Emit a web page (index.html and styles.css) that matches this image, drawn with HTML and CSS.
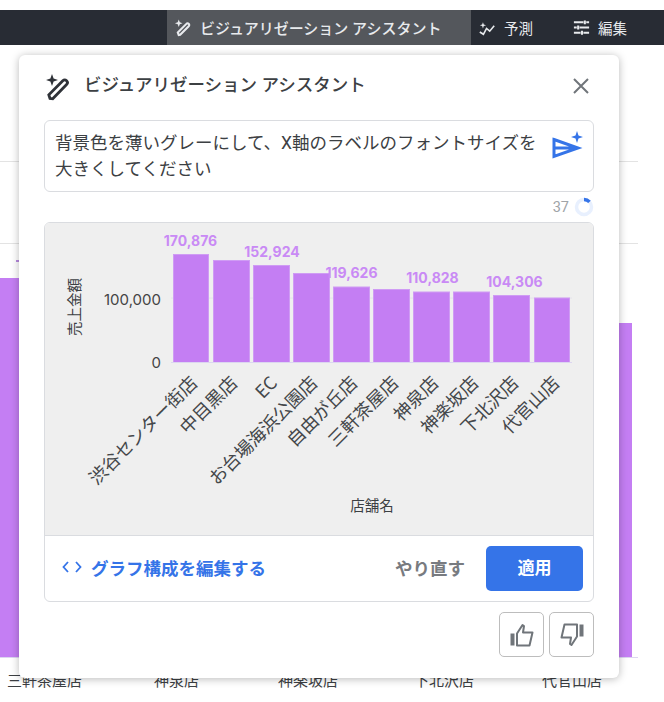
FILE: index.html
```html
<!DOCTYPE html>
<html lang="ja">
<head>
<meta charset="utf-8">
<title>ビジュアリゼーション アシスタント</title>
<link rel="stylesheet" href="styles.css">
</head>
<body>
<header class="topbar">
  <div class="tab tab-active">
    <svg class="tab-icon" viewBox="0 0 20 20"><path class="ico-line ico-heavy" d="M5 18 4 15.200 13 6.200a1.700 1.700 0 0 1 2.500 0 1.700 1.700 0 0 1 0 2.500L6.500 17.700Z"/><path class="ico-fill" d="M5 1.500l1.100 2.900L9 5.500 6.100 6.600 5 9.500 3.900 6.600 1 5.500l2.900-1.100Z"/></svg>
    <span>ビジュアリゼーション アシスタント</span>
  </div>
  <div class="tab tab-forecast">
    <svg class="tab-icon tab-icon-small" viewBox="0 0 20 20"><path class="ico-line" d="M2 14.500l4 2.500 3.500-6.500 3.500 3 5-6"/><path class="ico-fill" d="M5.500 3.500l.9 2.600 2.600.9-2.600.9-.9 2.600-.9-2.600L2 7l2.600-.9Z"/></svg>
    <span>予測</span>
  </div>
  <div class="tab tab-edit">
    <svg class="tab-icon" viewBox="0 0 20 20"><path class="ico-line ico-heavy" d="M2 4.500h10M15 4.500h3M2 10h3M8 10h10M2 15.500h7M12 15.500h6M13.500 2.500v4M6.500 8v4M10.500 13.500v4"/></svg>
    <span>編集</span>
  </div>
</header>

<div class="backdrop">
  <div class="bg-line bg-line-a"></div>
  <div class="bg-line bg-line-b"></div>
  <div class="bg-dash"></div>
  <div class="bg-bar bg-bar-left"></div>
  <div class="bg-bar bg-bar-right"></div>
  <div class="bg-line bg-line-c"></div>
  <span class="bg-label bg-l1">三軒茶屋店</span>
  <span class="bg-label bg-l2">神泉店</span>
  <span class="bg-label bg-l3">神楽坂店</span>
  <span class="bg-label bg-l4">下北沢店</span>
  <span class="bg-label bg-l5">代官山店</span>
</div>

<main class="dialog">
  <div class="dialog-head">
    <svg class="wand" viewBox="0 0 28 28"><path class="wand-body" d="M5 25.500 3.800 21.800 17.800 7.800a2.700 2.700 0 0 1 3.800 0 2.700 2.700 0 0 1 0 3.800L7.700 25.700Z"/><path class="wand-star" d="M7 1l1.600 4.400L13 7 8.600 8.600 7 13 5.400 8.600 1 7l4.400-1.600Z"/></svg>
    <h1 class="dialog-title">ビジュアリゼーション アシスタント</h1>
    <svg class="close" viewBox="0 0 20 20"><path d="M3 3l14 14M17 3 3 17"/></svg>
  </div>

  <div class="prompt">
    <p class="prompt-text">背景色を薄いグレーにして、X軸のラベルのフォントサイズを大きくしてください</p>
    <svg class="send" viewBox="0 0 32 32"><path class="send-tri" d="M3 9.500 27 18 3 26.500ZM3 18h24"/><path class="send-star" d="M26 1l1.500 4.500L32 7l-4.500 1.500L26 13l-1.500-4.500L20 7l4.500-1.500Z"/></svg>
  </div>

  <div class="counter">
    <span>37</span>
    <svg class="ring" viewBox="0 0 20 20"><circle class="ring-bg" cx="10" cy="10" r="7.500"/><path class="ring-arc" d="M10 2.500A7.500 7.500 0 0 1 15.500 4.900"/></svg>
  </div>

  <section class="result">
    <svg class="chart" viewBox="0 0 548 312">
      <line class="grid" x1="126" y1="75" x2="527" y2="75"/>
      <g class="bars">
        <rect x="128.500" y="31.500" width="35" height="108"/>
        <rect x="168.500" y="37.500" width="36" height="102"/>
        <rect x="208.500" y="42.500" width="36" height="97"/>
        <rect x="248.500" y="50.500" width="36" height="89"/>
        <rect x="288.500" y="64" width="36" height="75.500"/>
        <rect x="328.500" y="66.500" width="36" height="73"/>
        <rect x="368.500" y="69" width="36" height="70.500"/>
        <rect x="408.500" y="69" width="36" height="70.500"/>
        <rect x="448.500" y="72.500" width="36" height="67"/>
        <rect x="489.500" y="75" width="35" height="64.500"/>
      </g>
      <line class="axis" x1="126" y1="139.500" x2="527" y2="139.500"/>
      <g class="values">
        <text x="145.500" y="23">170,876</text>
        <text x="227" y="34">152,924</text>
        <text x="306.500" y="55">119,626</text>
        <text x="387.500" y="60">110,828</text>
        <text x="469.500" y="64">104,306</text>
      </g>
      <g class="ticks">
        <text x="116" y="82">100,000</text>
        <text x="116" y="145">0</text>
      </g>
      <g class="xlabels">
        <text transform="translate(153.500 161) rotate(-45)">渋谷センター街店</text>
        <text transform="translate(193.500 161) rotate(-45)">中目黒店</text>
        <text transform="translate(233.500 161) rotate(-45)">EC</text>
        <text transform="translate(273.500 161) rotate(-45)">お台場海浜公園店</text>
        <text transform="translate(313.500 161) rotate(-45)">自由が丘店</text>
        <text transform="translate(354.500 161) rotate(-45)">三軒茶屋店</text>
        <text transform="translate(394.500 161) rotate(-45)">神泉店</text>
        <text transform="translate(434.500 161) rotate(-45)">神楽坂店</text>
        <text transform="translate(474.500 161) rotate(-45)">下北沢店</text>
        <text transform="translate(515.500 161) rotate(-45)">代官山店</text>
      </g>
      <text class="axis-title" x="327" y="288">店舗名</text>
      <text class="axis-title" transform="translate(35 84) rotate(-90)">売上金額</text>
    </svg>
    <div class="actions">
      <a class="edit-link">
        <svg class="code" viewBox="0 0 20 14"><path d="M6 2 1.500 7 6 12M14 2l4.500 5L14 12"/></svg>
        <span>グラフ構成を編集する</span>
      </a>
      <span class="retry">やり直す</span>
      <button class="apply">適用</button>
    </div>
  </section>

  <div class="feedback">
    <button class="thumb">
      <svg viewBox="0 0 26 26"><path class="thumb-fill" d="M1.500 11.500h4v12h-4Z"/><path class="thumb-line" d="M8 11.500 13.500 3l1.500 1-1 6.500h9.500l-3 13H8Z"/></svg>
    </button>
    <button class="thumb">
      <svg viewBox="0 0 26 26"><path class="thumb-fill" d="M24.500 14.500h-4v-12h4Z"/><path class="thumb-line" d="M18 14.500 12.500 23l-1.500-1 1-6.500H2.500l3-13H18Z"/></svg>
    </button>
  </div>
</main>
</body>
</html>
```

FILE: styles.css
```css
* { box-sizing: border-box; }
html, body { margin: 0; padding: 0; }
body {
  position: relative;
  width: 664px;
  height: 702px;
  overflow: hidden;
  background: #fff;
  padding-top: 10px;
  font-family: "Roboto", "Noto Sans CJK JP", sans-serif;
  color: #3c4043;
}
.topbar {
  position: relative;
  height: 35px;
  background: #282c34;
  display: flex;
  align-items: center;
  padding-left: 167px;
  color: #e8eaed;
  font-size: 15px;
  font-weight: 500;
}
.tab { display: flex; align-items: center; height: 100%; }
.tab-active { width: 304px; background: #54575c; padding-left: 7px; gap: 7px; }
.tab-forecast { padding-left: 7px; gap: 8px; width: 101px; font-weight: 400; font-size: 14.500px; }
.tab-edit { gap: 7px; font-weight: 400; font-size: 14.500px; }
.tab-icon { width: 19px; height: 19px; }
.tab-icon-small { width: 18px; height: 18px; }
.ico-line { fill: none; stroke: #e8eaed; stroke-width: 1.800; }
.ico-heavy { stroke-width: 2.200; }
.ico-fill { fill: #e8eaed; }

.backdrop { position: absolute; inset: 0; }
.bg-line { position: absolute; left: 0; width: 638px; height: 1px; background: #e3e3e3; }
.bg-line-a { top: 161px; }
.bg-line-b { top: 243px; }
.bg-line-c { top: 657px; background: #dcd6f0; }
.bg-dash { position: absolute; left: 16px; top: 260px; width: 3px; height: 2px; background: #b98be0; }
.bg-bar { position: absolute; background: #c47ef3; bottom: 45px; }
.bg-bar-left { left: 0; width: 20px; top: 278px; }
.bg-bar-right { left: 600px; width: 32px; top: 323px; }
.bg-label { position: absolute; top: 670px; font-size: 15px; line-height: 22px; color: #3c4043; white-space: nowrap; }
.bg-l1 { left: 7px; }
.bg-l2 { left: 154px; }
.bg-l3 { left: 278px; }
.bg-l4 { left: 414px; }
.bg-l5 { left: 542px; }

.dialog {
  position: absolute;
  left: 19px;
  top: 55px;
  width: 600px;
  height: 623px;
  background: #fff;
  border-radius: 6px;
  box-shadow: 0 1px 8px rgba(0, 0, 0, .28);
  padding: 0 25px;
}
.dialog-head { display: flex; align-items: center; height: 65px; }
.wand { width: 28px; height: 28px; margin-left: 1px; margin-top: -2px; }
.wand-body { fill: none; stroke: #2f3238; stroke-width: 2.800; }
.wand-star { fill: #2f3238; }
.dialog-title {
  margin: 0 0 0 11px;
  font-size: 17.500px;
  font-weight: 500;
  color: #3c4043;
  flex: 1;
  line-height: 24px;
  position: relative;
  top: -3px;
}
.close { width: 20px; height: 20px; margin-right: 3px; margin-top: -4px; }
.close path { fill: none; stroke: #70757a; stroke-width: 2; }

.prompt {
  height: 72px;
  border: 1px solid #dadce0;
  border-radius: 6px;
  display: flex;
  padding: 9px 10px 0 10px;
  gap: 6px;
}
.prompt-text {
  margin: 0;
  width: 490px;
  font-size: 17.500px;
  line-height: 26px;
  color: #3c4043;
}
.send { width: 32px; height: 32px; margin-top: 0; }
.send-tri { fill: none; stroke: #3574e8; stroke-width: 3; }
.send-star { fill: #3574e8; }

.counter {
  height: 30px;
  display: flex;
  align-items: center;
  justify-content: flex-end;
  gap: 5px;
  font-size: 14.500px;
  color: #a0a4a8;
}
.ring { width: 20px; height: 20px; }
.ring-bg { fill: none; stroke: #e8f0fe; stroke-width: 3.500; }
.ring-arc { fill: none; stroke: #3574e8; stroke-width: 3.500; }

.result {
  height: 380px;
  border: 1px solid #dadce0;
  border-radius: 6px;
  overflow: hidden;
}
.chart { display: block; width: 548px; height: 312px; background: #efefef; }
.grid { stroke: #e4e2ea; }
.axis { stroke: #dcd6f0; }
.bars rect { fill: #c47ef3; stroke: #cf9cf4; stroke-width: 1; }
.values text { font-family: "Inter", "Roboto", sans-serif; font-size: 14px; font-weight: 700; fill: #c98af5; text-anchor: middle; }
.ticks text { font-family: "Inter", "Roboto", sans-serif; font-size: 15px; fill: #444; text-anchor: end; }
.xlabels text { font-family: "Noto Sans CJK JP", sans-serif; font-size: 18px; fill: #44474a; text-anchor: end; }
.axis-title { font-family: "Noto Sans CJK JP", sans-serif; font-size: 14.500px; fill: #3c4043; text-anchor: middle; }

.actions {
  height: 66px;
  border-top: 1px solid #dadce0;
  display: flex;
  align-items: center;
  padding: 0 10px 0 17px;
  font-size: 17.500px;
  font-weight: 700;
}
.edit-link { display: flex; align-items: center; gap: 9px; color: #3574e8; flex: 1; padding-bottom: 3px; }
.code { width: 20px; height: 14px; }
.code path { fill: none; stroke: #3574e8; stroke-width: 1.800; }
.retry { color: #787b80; margin-right: 21px; padding-bottom: 3px; }
.apply {
  width: 97px;
  height: 45px;
  border: 0;
  border-radius: 5px;
  background: #3574e8;
  color: #fff;
  font: inherit;
  font-size: 17px;
  padding: 0 0 4px;
}

.feedback { display: flex; justify-content: flex-end; gap: 5px; margin-top: 10px; }
.thumb {
  width: 45px;
  height: 45px;
  padding: 0;
  background: #fff;
  border: 1px solid #bdbdbd;
  border-radius: 5px;
  display: flex;
  align-items: center;
  justify-content: center;
}
.thumb svg { width: 26px; height: 26px; }
.thumb-fill { fill: #70757a; }
.thumb-line { fill: none; stroke: #70757a; stroke-width: 2; stroke-linejoin: round; }
```
